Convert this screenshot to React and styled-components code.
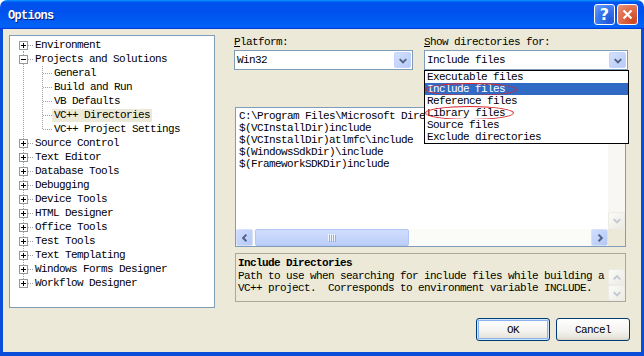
import React from "react";
import styled, { createGlobalStyle, css } from "styled-components";

const GlobalStyle = createGlobalStyle`
  html, body {
    margin: 0;
    padding: 0;
    background: #ffffff;
  }
  body {
    font-family: "Liberation Mono", "DejaVu Sans Mono", monospace;
  }
`;

const mono = css`
  font-family: "Liberation Mono", "DejaVu Sans Mono", monospace;
  font-size: 11px;
  letter-spacing: -0.6px;
  color: #000;
`;

const Window = styled.div`
  width: 644px;
  height: 356px;
  display: flex;
  flex-direction: column;
  overflow: hidden;
`;

const TitleBar = styled.div`
  height: 29px;
  flex: 0 0 29px;
  display: flex;
  align-items: center;
  gap: 2px;
  padding: 0 6px 0 8px;
  border-radius: 7px 7px 0 0;
  background: linear-gradient(
    180deg,
    #0997ff,
    #0053ee 8%,
    #0050ee 40%,
    #0062f5 88%,
    #0062f5 93%,
    #005bff 95%,
    #003dd7 96%,
    #003dd7
  );
`;

const Title = styled.div`
  flex: 1;
  padding-top: 2px;
  font-family: "Liberation Mono", "DejaVu Sans Mono", monospace;
  font-size: 12px;
  font-weight: 700;
  letter-spacing: -0.7px;
  color: #fff;
  text-shadow: 1px 1px #0a1883;
`;

const CaptionButton = styled.div`
  width: 21px;
  height: 21px;
  box-sizing: border-box;
  border: 1px solid #fff;
  border-radius: 3px;
  display: flex;
  align-items: center;
  justify-content: center;
  background: ${(p) =>
    p.$close
      ? "radial-gradient(circle at 80% 85%, #cc4622, #e0704f 60%, #e99a80)"
      : "radial-gradient(circle at 80% 85%, #1f56d8, #3a7af0 60%, #7aa6f7)"};
  color: #fff;
  font-family: "DejaVu Sans", sans-serif;
  font-weight: 700;
  font-size: 16px;
  line-height: 1;
`;

const Body = styled.div`
  flex: 1;
  display: flex;
  flex-direction: column;
  background: #ece9d8;
  border: 3px solid #0a4dd9;
  border-top: none;
  border-bottom-width: 4px;
  padding: 6px 11px 11px 6px;
`;

const Main = styled.div`
  display: flex;
  gap: 19px;
  height: 273px;
`;

const TreePanel = styled.div`
  width: 206px;
  box-sizing: border-box;
  border: 1px solid #7f9db9;
  background: #fff;
  padding-top: 2px;
  overflow: hidden;
`;

const TreeRow = styled.div`
  display: flex;
  align-items: center;
  height: 14px;
`;

const TreeLabel = styled.span`
  ${mono};
  line-height: 13px;
  padding: 0 2px;
  white-space: nowrap;
  background: ${(p) => (p.$selected ? "#ece9d8" : "transparent")};
`;

const RightCol = styled.div`
  flex: 1;
  display: flex;
  flex-direction: column;
`;

const FieldRow = styled.div`
  display: flex;
  gap: 11px;
`;

const Field = styled.div`
  flex: 0 0 ${(p) => p.$w}px;
  display: flex;
  flex-direction: column;
`;

const FieldLabel = styled.div`
  ${mono};
  line-height: 14px;
  height: 14px;
`;

const ComboWrap = styled.div`
  position: relative;
  margin-top: 1px;
`;

const Combo = styled.div`
  height: 20px;
  box-sizing: border-box;
  border: 1px solid #7f9db9;
  background: #fff;
  display: flex;
  align-items: center;
  padding-left: 2px;
  ${mono};
`;

const ComboText = styled.span`
  flex: 1;
  line-height: 12px;
`;

const ComboButton = styled.div`
  width: 17px;
  height: 16px;
  margin-right: 1px;
  box-sizing: border-box;
  border: 1px solid #c3d3fd;
  border-radius: 2px;
  background: linear-gradient(135deg, #d4e0fd, #b7cbf6);
`;

const Dropdown = styled.div`
  position: absolute;
  top: 100%;
  left: 0;
  right: -1px;
  z-index: 2;
  border: 1px solid #000;
  background: #fff;
`;

const Option = styled.div`
  position: relative;
  height: 12px;
  line-height: 12px;
  padding-left: 2px;
  ${mono};
  white-space: nowrap;
  background: ${(p) => (p.$selected ? "#316ac5" : "#fff")};
  color: ${(p) => (p.$selected ? "#fff" : "#000")};
`;

const Mark = styled.span`
  position: absolute;
  left: 0;
  top: ${(p) => p.$top}px;
  width: ${(p) => p.$w}px;
  height: ${(p) => p.$h}px;
  box-sizing: border-box;
  border: 1px solid #d9262e;
  border-radius: 50%;
`;

const ListBox = styled.div`
  margin: 37px 0 0 1px;
  width: 391px;
  height: 140px;
  box-sizing: border-box;
  border: 1px solid #7f9db9;
  background: #fff;
  display: grid;
  grid-template-columns: 1fr 17px;
  grid-template-rows: 1fr 17px;
`;

const ListContent = styled.div`
  padding: 2px 0 0 3px;
  overflow: hidden;
`;

const ListLine = styled.div`
  ${mono};
  line-height: 12px;
  height: 12px;
  white-space: pre;
  overflow: hidden;
  width: ${(p) => (p.$w ? `${p.$w}px` : "auto")};
`;

const VScroll = styled.div`
  display: flex;
  flex-direction: column;
  justify-content: space-between;
  background: #f8f7f3;
`;

const HScroll = styled.div`
  display: flex;
  align-items: stretch;
  background: #fbfbf8;
`;

const Corner = styled.div`
  background: #ece9d8;
`;

const ArrowBtn = styled.div`
  flex: 0 0 ${(p) => p.$h || 17}px;
  width: 17px;
  height: ${(p) => p.$h || 17}px;
  box-sizing: border-box;
  border-radius: 2px;
  border: 1px solid ${(p) => (p.$disabled ? "#ecebe4" : "#d6e2fd")};
  background: ${(p) =>
    p.$disabled
      ? "linear-gradient(135deg, #fbfbf8, #ebeae3)"
      : "linear-gradient(135deg, #cfdcfd, #b5c9f6)"};
  margin-left: ${(p) => (p.$start ? "0" : "auto")};
`;

const Thumb = styled.div`
  flex: 0 0 154px;
  margin-left: 2px;
  box-sizing: border-box;
  border: 1px solid #b3c6f3;
  border-radius: 2px;
  background: linear-gradient(180deg, #cfdcfd, #bccff8);
  display: flex;
  align-items: center;
  justify-content: center;
`;

const Desc = styled.div`
  margin: 6px 0 0 1px;
  width: 391px;
  height: 49px;
  box-sizing: border-box;
  border: 1px solid #aca899;
  display: flex;
  flex-direction: column;
`;

const DescTitle = styled.div`
  ${mono};
  font-weight: 700;
  line-height: 12px;
  padding: 3px 0 0 2px;
`;

const DescBody = styled.div`
  flex: 1;
  display: grid;
  grid-template-columns: 1fr 17px;
`;

const DescText = styled.div`
  ${mono};
  line-height: 12px;
  padding: 1px 0 0 2px;
  white-space: pre;
  overflow: hidden;
`;

const DescScroll = styled.div`
  display: flex;
  flex-direction: column;
`;

const Footer = styled.div`
  display: flex;
  justify-content: flex-end;
  gap: 6px;
  margin-top: 10px;
`;

const Button = styled.div`
  width: 74px;
  height: 23px;
  box-sizing: border-box;
  border: 1px solid #003c74;
  border-radius: 3px;
  background: linear-gradient(180deg, #ffffff, #f3f2ee 60%, #e6e3da 90%, #d6d0c5);
  box-shadow: ${(p) =>
    p.$default ? "inset 0 0 0 1px #cee7ff, inset 0 0 0 2px #8ab1f0" : "none"};
  display: flex;
  align-items: center;
  justify-content: center;
  ${mono};
`;

const Chevron = ({ dir = "down", color = "#4d6185" }) => {
  const pts = {
    down: "5,6.5 8.5,10 12,6.5",
    up: "5,10 8.5,6.5 12,10",
    left: "10,5 6.5,8.5 10,12",
    right: "7,5 10.5,8.5 7,12",
  }[dir];
  return (
    <svg width="15" height="15" viewBox="0 0 16 16" style={{ display: "block" }}>
      <polyline points={pts} fill="none" stroke={color} strokeWidth="2" />
    </svg>
  );
};

const Grip = () => (
  <svg width="8" height="8" viewBox="0 0 8 8">
    {[0, 2, 4, 6].map((x) => (
      <g key={x}>
        <line x1={x + 0.5} y1="0" x2={x + 0.5} y2="7" stroke="#eef4fe" />
        <line x1={x + 1.5} y1="1" x2={x + 1.5} y2="8" stroke="#8cb0f8" />
      </g>
    ))}
  </svg>
);

const dots = { stroke: "#a0a0a0", strokeDasharray: "1 1", shapeRendering: "crispEdges" };

const RootGutter = ({ first, last, expanded }) => (
  <svg width="23" height="14" viewBox="0 0 23 14" style={{ flex: "0 0 23px" }}>
    <line x1="13.5" y1={first ? 7 : 0} x2="13.5" y2={last ? 8 : 14} {...dots} />
    <line x1="18" y1="7.5" x2="23" y2="7.5" {...dots} />
    <rect x="9.5" y="3.5" width="8" height="8" fill="#fff" stroke="#919b9c" shapeRendering="crispEdges" />
    <line x1="11" y1="7.5" x2="16" y2="7.5" stroke="#000" shapeRendering="crispEdges" />
    {!expanded && <line x1="13.5" y1="5" x2="13.5" y2="10" stroke="#000" shapeRendering="crispEdges" />}
  </svg>
);

const ChildGutter = ({ last }) => (
  <svg width="42" height="14" viewBox="0 0 42 14" style={{ flex: "0 0 42px" }}>
    <line x1="13.5" y1="0" x2="13.5" y2="14" {...dots} />
    <line x1="32.5" y1="0" x2="32.5" y2={last ? 8 : 14} {...dots} />
    <line x1="33" y1="7.5" x2="42" y2="7.5" {...dots} />
  </svg>
);

const roots = [
  { name: "Environment" },
  {
    name: "Projects and Solutions",
    children: ["General", "Build and Run", "VB Defaults", "VC++ Directories", "VC++ Project Settings"],
  },
  { name: "Source Control" },
  { name: "Text Editor" },
  { name: "Database Tools" },
  { name: "Debugging" },
  { name: "Device Tools" },
  { name: "HTML Designer" },
  { name: "Office Tools" },
  { name: "Test Tools" },
  { name: "Text Templating" },
  { name: "Windows Forms Designer" },
  { name: "Workflow Designer" },
];

const options = [
  "Executable files",
  "Include files",
  "Reference files",
  "Library files",
  "Source files",
  "Exclude directories",
];

// first path runs on under the open drop-down, so only its visible part is kept
const dirs = [
  { text: "C:\\Program Files\\Microsoft Dire", w: 185 },
  { text: "$(VCInstallDir)include" },
  { text: "$(VCInstallDir)atlmfc\\include" },
  { text: "$(WindowsSdkDir)\\include" },
  { text: "$(FrameworkSDKDir)include" },
];

const Tree = () => (
  <TreePanel>
    {roots.map((r, i) => (
      <React.Fragment key={r.name}>
        <TreeRow>
          <RootGutter first={i === 0} last={i === roots.length - 1} expanded={!!r.children} />
          <TreeLabel>{r.name}</TreeLabel>
        </TreeRow>
        {r.children &&
          r.children.map((c, j) => (
            <TreeRow key={c}>
              <ChildGutter last={j === r.children.length - 1} />
              <TreeLabel $selected={c === "VC++ Directories"}>{c}</TreeLabel>
            </TreeRow>
          ))}
      </React.Fragment>
    ))}
  </TreePanel>
);

export default function App() {
  return (
    <>
      <GlobalStyle />
      <Window>
        <TitleBar>
          <Title>Options</Title>
          <CaptionButton>?</CaptionButton>
          <CaptionButton $close>
            <svg width="13" height="13" viewBox="0 0 13 13">
              <path d="M2.5 2.5 L10.5 10.5 M10.5 2.5 L2.5 10.5" stroke="#fff" strokeWidth="2.2" />
            </svg>
          </CaptionButton>
        </TitleBar>
        <Body>
          <Main>
            <Tree />
            <RightCol>
              <FieldRow>
                <Field $w={179}>
                  <FieldLabel>
                    <u>P</u>latform:
                  </FieldLabel>
                  <ComboWrap>
                    <Combo>
                      <ComboText>Win32</ComboText>
                      <ComboButton>
                        <Chevron />
                      </ComboButton>
                    </Combo>
                  </ComboWrap>
                </Field>
                <Field $w={204}>
                  <FieldLabel>
                    <u>S</u>how directories for:
                  </FieldLabel>
                  <ComboWrap>
                    <Combo>
                      <ComboText>Include files</ComboText>
                      <ComboButton>
                        <Chevron />
                      </ComboButton>
                    </Combo>
                    <Dropdown>
                      {options.map((o) => (
                        <Option key={o} $selected={o === "Include files"}>
                          {o}
                          {o === "Include files" && <Mark $top={0} $w={92} $h={13} />}
                          {o === "Library files" && <Mark $top={-1} $w={89} $h={14} />}
                        </Option>
                      ))}
                    </Dropdown>
                  </ComboWrap>
                </Field>
              </FieldRow>

              <ListBox>
                <ListContent>
                  {dirs.map((d) => (
                    <ListLine key={d.text} $w={d.w}>
                      {d.text}
                    </ListLine>
                  ))}
                </ListContent>
                <VScroll>
                  <ArrowBtn $disabled>
                    <Chevron dir="up" color="#c3c8d6" />
                  </ArrowBtn>
                  <ArrowBtn $disabled>
                    <Chevron dir="down" color="#c3c8d6" />
                  </ArrowBtn>
                </VScroll>
                <HScroll>
                  <ArrowBtn $start>
                    <Chevron dir="left" />
                  </ArrowBtn>
                  <Thumb>
                    <Grip />
                  </Thumb>
                  <ArrowBtn>
                    <Chevron dir="right" />
                  </ArrowBtn>
                </HScroll>
                <Corner />
              </ListBox>

              <Desc>
                <DescTitle>Include Directories</DescTitle>
                <DescBody>
                  <DescText>
                    {"Path to use when searching for include files while building a\nVC++ project.  Corresponds to environment variable INCLUDE."}
                  </DescText>
                  <DescScroll>
                    <ArrowBtn $disabled $h={16}>
                      <Chevron dir="up" color="#c3c8d6" />
                    </ArrowBtn>
                    <ArrowBtn $disabled $h={16}>
                      <Chevron dir="down" color="#c3c8d6" />
                    </ArrowBtn>
                  </DescScroll>
                </DescBody>
              </Desc>
            </RightCol>
          </Main>
          <Footer>
            <Button $default>OK</Button>
            <Button>Cancel</Button>
          </Footer>
        </Body>
      </Window>
    </>
  );
}
